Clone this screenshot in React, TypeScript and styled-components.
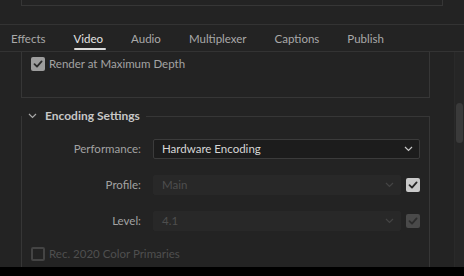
import React from 'react';
import styled, { createGlobalStyle } from 'styled-components';

const GlobalStyle = createGlobalStyle`
  body {
    margin: 0;
    background: #232323;
    font-family: Lato, 'Noto Sans', sans-serif;
    font-size: 11.5px;
    line-height: 16px;
  }
`;

const Screen = styled.div`
  width: 464px;
  height: 276px;
  display: flex;
  flex-direction: column;
  overflow: hidden;
  background: #232323;
`;

const TopStrip = styled.div`
  height: 24px;
  flex: none;
  padding: 0 21px;
  border-bottom: 1px solid #333;
`;

const TopPanelEdge = styled.div`
  height: 6px;
  box-sizing: border-box;
  border: 1px solid #363636;
  border-top: none;
`;

const TabBar = styled.div`
  height: 26px;
  flex: none;
  display: flex;
  gap: 28px;
  padding-left: 11px;
  border-bottom: 1px solid #333;
`;

const Tab = styled.div<{ $active?: boolean }>`
  position: relative;
  line-height: 26px;
  padding-top: 1px;
  color: ${(p) => (p.$active ? '#e4e4e4' : '#a9a9a9')};
  &::after {
    content: '';
    display: ${(p) => (p.$active ? 'block' : 'none')};
    position: absolute;
    left: 0;
    right: -3px;
    bottom: 1px;
    height: 2px;
    border-radius: 1px;
    background: #dcdcdc;
  }
`;

const Body = styled.div`
  flex: 1;
  display: flex;
  min-height: 0;
`;

const Content = styled.div`
  flex: 1;
  padding-left: 21px;
  padding-right: 24px;
  overflow: hidden;
`;

const RenderBox = styled.div`
  height: 46px;
  box-sizing: border-box;
  border: 1px solid #363636;
  border-top: none;
  padding: 4px 0 0 9px;
`;

const CheckRow = styled.label<{ $dim?: boolean }>`
  display: flex;
  align-items: center;
  gap: 4px;
  height: 16px;
  color: ${(p) => (p.$dim ? '#4f4f4f' : '#a4a4a4')};
`;

const Box = styled.span<{ $tone: 'on' | 'mid' | 'dim' | 'off' }>`
  width: 14px;
  height: 14px;
  box-sizing: border-box;
  border-radius: 2px;
  flex: none;
  display: flex;
  align-items: center;
  justify-content: center;
  background: ${(p) =>
    p.$tone === 'on' ? '#c9c9c9' : p.$tone === 'mid' ? '#9d9d9d' : p.$tone === 'dim' ? '#4a4a4a' : 'transparent'};
  border: ${(p) => (p.$tone === 'off' ? '2px solid #444' : 'none')};
`;

const Section = styled.fieldset`
  margin: 10px 0 0 0;
  padding: 0;
  border: 1px solid #363636;
  border-bottom: none;
  height: 170px;
`;

const Legend = styled.legend`
  padding: 0 6px 0 0;
  margin: 0;
  height: 16px;
  display: flex;
  align-items: center;
  gap: 8px;
  color: #c7c7c7;
  font-weight: 700;
  font-size: 12px;
`;

const Chevron = styled.svg`
  margin-left: 6px;
`;

const Rows = styled.div`
  display: grid;
  grid-template-columns: 119px 1fr;
  grid-auto-rows: 20px;
  column-gap: 12px;
  row-gap: 16px;
  padding: 15px 9px 0 0;
`;

const Label = styled.div`
  text-align: right;
  line-height: 20px;
  color: #a2a2a2;
`;

const Field = styled.div`
  display: flex;
  align-items: center;
  gap: 5px;
`;

const Select = styled.div<{ $disabled?: boolean }>`
  flex: 1;
  height: 20px;
  box-sizing: border-box;
  border-radius: 2px;
  display: flex;
  align-items: center;
  justify-content: space-between;
  padding: 0 6px 0 8px;
  background: ${(p) => (p.$disabled ? '#282828' : '#1c1c1c')};
  border: 1px solid ${(p) => (p.$disabled ? '#282828' : '#3b3b3b')};
  color: ${(p) => (p.$disabled ? '#4e4e4e' : '#d6d6d6')};
`;

const RecRow = styled.div`
  padding: 15px 0 0 9px;
`;

const BottomBar = styled.div`
  height: 9px;
  flex: none;
  background: #000;
`;

const Scrollbar = styled.div`
  width: 9px;
  flex: none;
  border-left: 1px solid #2a2a2a;
  background: #262626;
  padding-top: 51px;
`;

const Thumb = styled.div`
  width: 7px;
  height: 40px;
  margin-left: 1px;
  border-radius: 4px;
  background: #3a3a3a;
`;

const Check = ({ color }: { color: string }) => (
  <svg width="10" height="10" viewBox="0 0 10 10">
    <path d="M1.5 5.2 L4 7.6 L8.6 2.4" fill="none" stroke={color} strokeWidth="1.8" strokeLinecap="round" strokeLinejoin="round" />
  </svg>
);

const Caret = ({ color }: { color: string }) => (
  <svg width="9" height="6" viewBox="0 0 9 6">
    <path d="M1 1 L4.5 4.5 L8 1" fill="none" stroke={color} strokeWidth="1.2" />
  </svg>
);

const tabs = ['Effects', 'Video', 'Audio', 'Multiplexer', 'Captions', 'Publish'];

export default function App() {
  return (
    <>
      <GlobalStyle />
      <Screen>
        <TopStrip>
          <TopPanelEdge />
        </TopStrip>
        <TabBar>
          {tabs.map((t) => (
            <Tab key={t} $active={t === 'Video'}>
              {t}
            </Tab>
          ))}
        </TabBar>
        <Body>
          <Content>
            <RenderBox>
              <CheckRow>
                <Box $tone="mid">
                  <Check color="#2a2a2a" />
                </Box>
                Render at Maximum Depth
              </CheckRow>
            </RenderBox>
            <Section>
              <Legend>
                <Chevron width="9" height="6" viewBox="0 0 9 6">
                  <path d="M1 1 L4.5 4.5 L8 1" fill="none" stroke="#a8a8a8" strokeWidth="1.2" />
                </Chevron>
                Encoding Settings
              </Legend>
              <Rows>
                <Label>Performance:</Label>
                <Field>
                  <Select>
                    Hardware Encoding
                    <Caret color="#c8c8c8" />
                  </Select>
                </Field>
                <Label>Profile:</Label>
                <Field>
                  <Select $disabled>
                    Main
                    <Caret color="#444" />
                  </Select>
                  <Box $tone="on">
                    <Check color="#262626" />
                  </Box>
                </Field>
                <Label>Level:</Label>
                <Field>
                  <Select $disabled>
                    4.1
                    <Caret color="#444" />
                  </Select>
                  <Box $tone="dim">
                    <Check color="#2c2c2c" />
                  </Box>
                </Field>
              </Rows>
              <RecRow>
                <CheckRow $dim>
                  <Box $tone="off" />
                  Rec. 2020 Color Primaries
                </CheckRow>
              </RecRow>
            </Section>
          </Content>
          <Scrollbar>
            <Thumb />
          </Scrollbar>
        </Body>
        <BottomBar />
      </Screen>
    </>
  );
}
